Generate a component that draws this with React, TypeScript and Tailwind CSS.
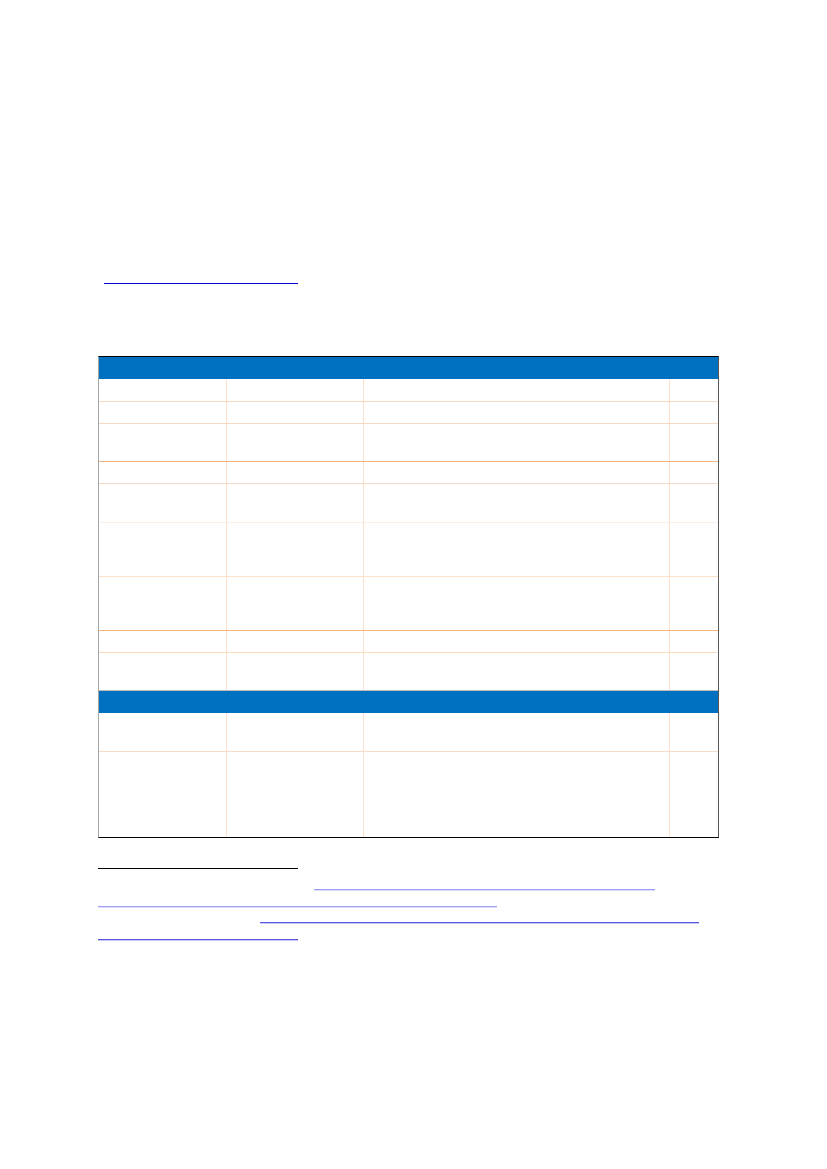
const rows: { h: string; line: string }[] = [
  { h: "h-[22px]", line: "border-[#f7dac4]" },
  { h: "h-[21px]", line: "border-[#f7dac4]" },
  { h: "h-[37px]", line: "border-[#f4b585]" },
  { h: "h-[21px]", line: "border-[#f8dac4]" },
  { h: "h-[38px]", line: "border-[#fdefe5]" },
  { h: "h-[53px]", line: "border-[#fde1c9]" },
  { h: "h-[53px]", line: "border-[#f7b47c]" },
  { h: "h-[21px]", line: "border-[#fddbbd]" },
  { h: "h-[37px]", line: "border-[#bdbdbd]" },
]

const rows2: { h: string; line: string }[] = [
  { h: "h-[38px]", line: "border-[#f5dcc9]" },
  { h: "h-[85px]", line: "border-transparent" },
]

function Row({ h, line, last }: { h: string; line: string; last?: boolean }) {
  return (
    <div
      className={`grid grid-cols-[128px_137px_306px_48px] ${h} ${last ? "" : "border-b " + line} box-content`}
    >
      <div className="border-r border-[#fde0cc]" />
      <div className="border-r border-[#fde0cc]" />
      <div className="border-r border-[#fde0cc]" />
      <div />
    </div>
  )
}

export default function App() {
  return (
    <div className="w-[827px] h-[1169px] bg-white pl-[98px] pt-[283px] font-['Liberation_Sans',sans-serif]">
      {/* underlined heading link */}
      <div className="ml-[6px] w-[194px] h-px bg-[#0000cc]" />

      {/* table */}
      <div className="mt-[72px] w-[621px] border-t border-b border-t-black border-b-black border-l border-l-[#a6a6a6] border-r border-r-[#555555]">
        <div className="h-[22px] bg-[#0070c0]" />
        {rows.map((r, i) => (
          <Row key={i} h={r.h} line={r.line} />
        ))}
        <div className="h-[22px] bg-[#0070c0]" />
        {rows2.map((r, i) => (
          <Row key={i} h={r.h} line={r.line} last={i === rows2.length - 1} />
        ))}
      </div>

      {/* footnotes */}
      <div className="mt-[30px] w-[200px] h-px bg-black" />
      <div className="mt-[20px] ml-[216px] w-[341px] h-[2px] border-t border-[#9e9ef2] border-b border-b-[#dcdcfa] box-border" />
      <div className="mt-[15px] w-[399px] h-[2px] border-t border-[#9e9ef2] border-b border-b-[#dcdcfa] box-border" />
      <div className="mt-[14px] ml-[162px] w-[439px] h-[2px] border-t border-[#5656e0] border-b border-b-[#c8c8f6] box-border" />
      <div className="mt-[15px] w-[200px] h-[2px] border-t border-[#5656e0] border-b border-b-[#c8c8f6] box-border" />
    </div>
  )
}
